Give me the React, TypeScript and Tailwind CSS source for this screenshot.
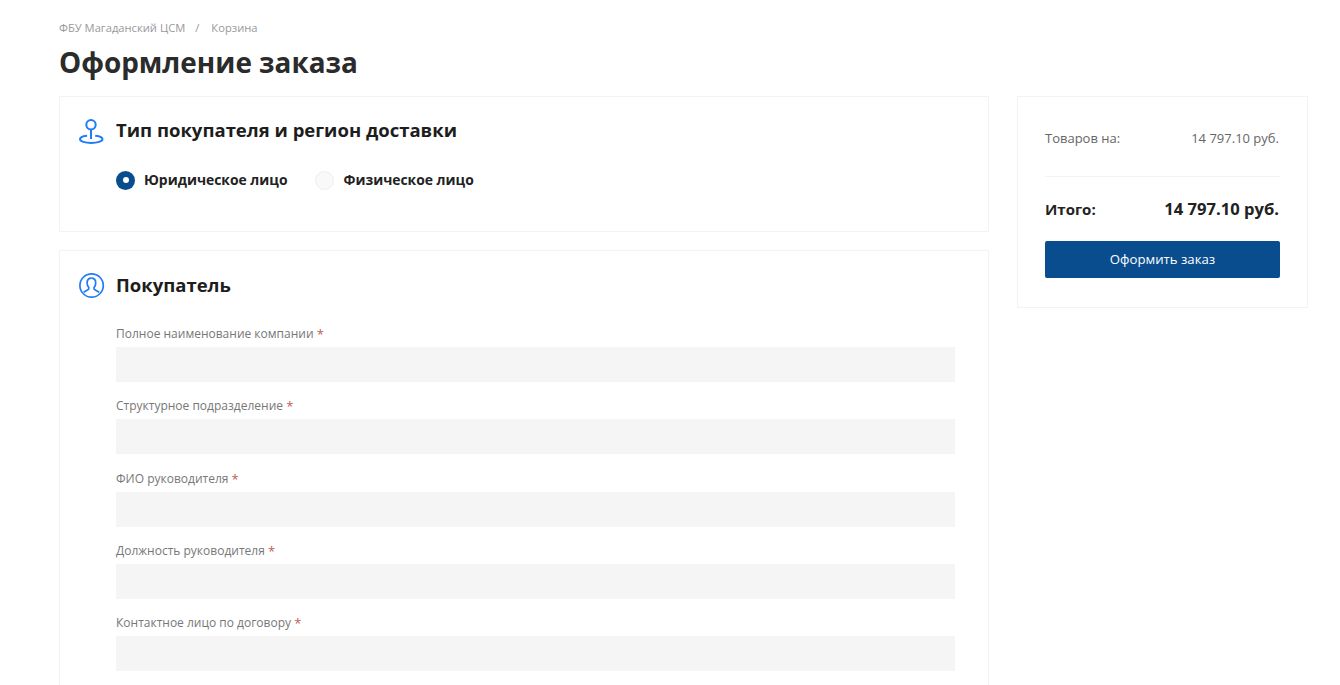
export default function App() {
  const fields = [
    "Полное наименование компании",
    "Структурное подразделение",
    "ФИО руководителя",
    "Должность руководителя",
    "Контактное лицо по договору",
  ];
  return (
    <div className="h-[685px] overflow-hidden bg-white pl-[59px] pr-[32px] text-[#222]" style={{ fontFamily: '"Open Sans", sans-serif' }}>
      <div className="pt-[20px] flex h-[36px] text-[11.2px] leading-[15px] text-[#999]">
        <span>ФБУ Магаданский ЦСМ</span>
        <span className="ml-[10px] mr-[12px]">/</span>
        <span>Корзина</span>
      </div>
      <h1 className="text-[27.9px] leading-[38px] font-bold text-[#2b2b2b] mt-[7px]">Оформление заказа</h1>
      <div className="flex items-start gap-[28px] mt-[15px]">
        <div className="w-[930px] shrink-0 flex flex-col gap-[18px]">
          <section className="h-[136px] border border-[#f3f3f3] pt-[20px] pl-[18px]">
            <div className="flex items-center h-[28px]">
              <svg className="w-[26px] h-[26px] overflow-visible text-[#1e7bfa]" viewBox="0 0 26 26" fill="none" stroke="currentColor" strokeWidth="2">
                <g transform="translate(-0.4 0)">
                  <circle cx="13.4" cy="6.8" r="4.7" />
                  <path d="M13.4 11.5V21" />
                  <path d="M9.5 17.8C5.2 18.2 2.4 19.5 2.4 21.3C2.4 23.3 7.4 24.9 13.6 24.9C19.8 24.9 24.9 23.3 24.9 21.3C24.9 19.5 22 18.2 17.6 17.8" />
                </g>
              </svg>
              <h2 className="ml-[12px] -translate-y-px text-[18.5px] leading-[26px] font-bold text-[#1d1d1d]">Тип покупателя и регион доставки</h2>
            </div>
            <div className="flex items-center mt-[25px] ml-[38px] text-[13.9px] font-bold leading-[20px] text-[#222]">
              <span className="w-[19px] h-[19px] rounded-full bg-[#0a4d8f] flex items-center justify-center">
                <span className="w-[6px] h-[6px] rounded-full bg-white" />
              </span>
              <span className="ml-[9px]">Юридическое лицо</span>
              <span className="ml-[28px] w-[19px] h-[19px] rounded-full bg-[#f9f9f9] border border-[#eeeeee]" />
              <span className="ml-[9px]">Физическое лицо</span>
            </div>
          </section>
          <section className="border border-[#f3f3f3] pt-[20px] pl-[18px] pr-[32px] h-[500px]">
            <div className="flex items-center h-[28px]">
              <svg className="w-[26px] h-[26px] overflow-visible text-[#1e7bfa]" viewBox="0 0 26 26" fill="none" stroke="currentColor" strokeWidth="1.7">
                <g transform="translate(-0.9 -1)">
                  <circle cx="14.5" cy="14.5" r="11.7" />
                  <path d="M14.3 7.2C11.4 7.2 10 9.4 10 11.9C10 14 10.8 15.6 11.8 16.8C12 18 11.3 18.7 10 19.3L6.5 21.3" />
                  <path d="M14.3 7.2C17.2 7.2 18.6 9.4 18.6 11.9C18.6 14 17.8 15.6 16.8 16.8C16.6 18 17.3 18.7 18.6 19.3L22.1 21.3" />
                </g>
              </svg>
              <h2 className="ml-[12px] text-[18.5px] leading-[26px] font-bold text-[#1d1d1d]">Покупатель</h2>
            </div>
            <div className="ml-[38px] mr-[1px] mt-[26px] flex flex-col gap-[15.25px]">
              {fields.map((f) => (
                <label key={f} className="block">
                  <span className="block text-[12px] leading-[16px] h-[22px] pt-[1px] text-[#777]">
                    {f} <span className="text-[#c0604f] text-[13px] leading-[16px] align-[-1px]">*</span>
                  </span>
                  <span className="block h-[35px] bg-[#f5f5f5]" />
                </label>
              ))}
            </div>
          </section>
        </div>
        <aside className="w-[292px] h-[212px] border border-[#f3f3f3] px-[27px] pt-[32px]">
          <div className="flex justify-between pr-[1px] text-[13px] leading-[18px] text-[#666]">
            <span>Товаров на:</span>
            <span>14 797.10 руб.</span>
          </div>
          <div className="h-px bg-[#f3f3f3] mt-[29px]" />
          <div className="flex justify-between pr-[1px] items-center mt-[21px] h-[22px] font-bold text-[#222]">
            <span className="text-[15px]">Итого:</span>
            <span className="text-[16.6px]">14 797.10 руб.</span>
          </div>
          <button className="mt-[21px] w-full h-[37px] rounded-[2px] bg-[#0a4d8f] text-white text-[13.2px]">Оформить заказ</button>
        </aside>
      </div>
    </div>
  );
}
